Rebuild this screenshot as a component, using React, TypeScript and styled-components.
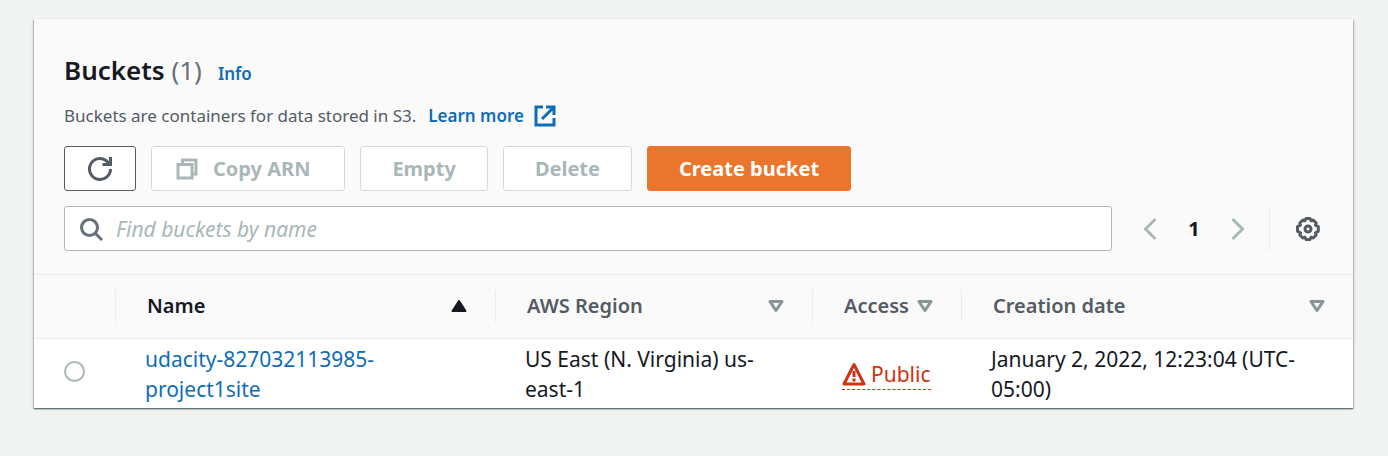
import React from "react";
import styled, { createGlobalStyle, css } from "styled-components";

const GlobalStyle = createGlobalStyle`
  *, *::before, *::after { box-sizing: border-box; }
  body {
    margin: 0;
    background: #f1f3f3;
    color: #16191f;
    font-family: "Noto Sans", "Open Sans", sans-serif;
    font-size: 20px;
    line-height: 30px;
  }
  button, input { font: inherit; }
`;

const Page = styled.main`
  padding: 19px 35px 48px 34px;
`;

const Panel = styled.section`
  background: #fff;
  box-shadow: 0 1px 1px 0 rgba(0, 28, 36, 0.4), 1px 1px 2px 0 rgba(0, 28, 36, 0.25),
    -1px 1px 2px 0 rgba(0, 28, 36, 0.25);
`;

const PanelHeader = styled.header`
  padding: 30px 30px 23px;
  background: #fafafa;
  border-bottom: 1px solid #eaeded;
`;

const TitleRow = styled.div`
  display: flex;
  align-items: baseline;
  gap: 16px;
  line-height: 42px;
`;

const Title = styled.h1`
  margin: 0;
  font-size: 26px;
  font-weight: 600;
`;

const Count = styled.span`
  color: #687078;
  font-weight: 400;
`;

const InfoLink = styled.a`
  color: #0f6db7;
  font-size: 17px;
  font-weight: 600;
  text-decoration: none;
`;

const Description = styled.p`
  display: flex;
  align-items: center;
  margin: 6px 0 15px;
  color: #545b64;
  font-size: 17px;
`;

const LearnMore = styled.a`
  display: inline-flex;
  align-items: center;
  gap: 10px;
  margin-left: 12px;
  color: #0f6db7;
  font-weight: 600;
  text-decoration: none;
`;

const Actions = styled.div`
  display: flex;
  flex-wrap: wrap;
  gap: 15px;
`;

const Button = styled.button<{ $variant?: "primary" | "icon" | "labelled" }>`
  display: inline-flex;
  align-items: center;
  justify-content: center;
  gap: 15px;
  height: 45px;
  padding: 0 31px;
  border: 1px solid #545b64;
  border-radius: 3px;
  background: #fff;
  color: #545b64;
  font-weight: 700;
  cursor: pointer;

  &:disabled {
    border-color: #d5dbdb;
    color: #aab7b8;
    cursor: default;
  }

  ${({ $variant }) =>
    $variant === "primary" &&
    css`
      border-color: #ea752c;
      background: #ea752c;
      color: #fff;
    `}

  ${({ $variant }) =>
    $variant === "icon" &&
    css`
      padding: 0 22px;
    `}

  ${({ $variant }) =>
    $variant === "labelled" &&
    css`
      padding: 0 34px 0 24px;
    `}
`;

const Toolbar = styled.div`
  display: flex;
  align-items: center;
  margin-top: 15px;
`;

const SearchBox = styled.label`
  display: flex;
  flex: 1;
  align-items: center;
  gap: 13px;
  height: 45px;
  padding: 0 14px;
  border: 1px solid #aab7b8;
  border-radius: 3px;
  background: #fff;
  color: #687078;
  font-size: 21px;
`;

const SearchInput = styled.input`
  flex: 1;
  min-width: 0;
  padding: 0;
  border: 0;
  outline: 0;
  background: transparent;
  color: #16191f;

  &::placeholder {
    color: #aab7b8;
    font-style: italic;
    opacity: 1;
  }
`;

const Pagination = styled.nav`
  display: flex;
  align-items: center;
  gap: 20px;
  margin: 0 19px 0 26px;
`;

const PlainButton = styled.button`
  display: flex;
  align-items: center;
  justify-content: center;
  width: 24px;
  height: 30px;
  padding: 0;
  border: 0;
  background: transparent;
  color: #545b64;
  font-weight: 700;
  cursor: pointer;

  &:disabled {
    color: #aab7b8;
  }

  &[aria-current] {
    color: #16191f;
  }
`;

const Preferences = styled.div`
  display: flex;
  align-items: center;
  height: 45px;
  padding: 0 3px 0 26px;
  border-left: 1px solid #eaeded;
`;

const Table = styled.table`
  width: 100%;
  table-layout: fixed;
  border-collapse: collapse;
`;

const Column = styled.col<{ $width: number }>`
  width: ${({ $width }) => $width}px;
`;

const HeadCell = styled.th`
  height: 63px;
  padding: 0;
  border-bottom: 1px solid #eaeded;
  background: #fafafa;
  text-align: left;
`;

const HeadContent = styled.div<{ $sorted?: boolean }>`
  display: flex;
  align-items: center;
  justify-content: space-between;
  height: 32px;
  padding: 0 28px 0 31px;
  border-left: 1px solid #eaeded;
  color: ${({ $sorted }) => ($sorted ? "#16191f" : "#545b64")};
  font-weight: 600;
  white-space: nowrap;
`;

const Cell = styled.td`
  height: 69px;
  padding: 5px 30px 4px;
  font-size: 21px;
  vertical-align: middle;
`;

const Radio = styled.input`
  display: block;
  width: 21px;
  height: 21px;
  margin: 0 0 4px;
  border: 2px solid #aab7b8;
  border-radius: 50%;
  appearance: none;
  background: #fff;

  &:checked {
    border: 6px solid #0f6db7;
  }
`;

const BucketLink = styled.a`
  color: #0f6db7;
  text-decoration: none;
`;

const AccessStatus = styled.span`
  display: inline-flex;
  align-items: center;
  gap: 5px;
  border-bottom: 1px dashed #d13212;
  color: #d13212;
  vertical-align: middle;
`;

const ExternalIcon = () => (
  <svg width="22" height="22" viewBox="0 0 22 22" fill="none" stroke="currentColor" strokeWidth="3" aria-hidden="true">
    <path d="M9 2H2v18h18v-7M12 2h8v8M20 2 8 14" />
  </svg>
);

const RefreshIcon = () => (
  <svg width="26" height="26" viewBox="0 0 26 26" fill="none" stroke="currentColor" strokeWidth="3" aria-hidden="true">
    <path d="M23.500 13a10.500 10.500 0 1 1-4.500-8.600l4 4" />
    <path d="M23.500 1v7.500h-8" />
  </svg>
);

const CopyIcon = () => (
  <svg width="22" height="22" viewBox="0 0 22 22" fill="none" stroke="currentColor" strokeWidth="3" aria-hidden="true">
    <path d="M2 6.500h14V20H2zM6.500 6.500V2H20v14h-4" />
  </svg>
);

const SearchIcon = () => (
  <svg width="24" height="24" viewBox="0 0 24 24" fill="none" stroke="currentColor" strokeWidth="3" aria-hidden="true">
    <circle cx="10.500" cy="10.500" r="8" />
    <path d="m16 16 7 7" />
  </svg>
);

const ChevronIcon = ({ direction }: { direction: "left" | "right" }) => (
  <svg width="14" height="24" viewBox="0 0 14 24" fill="none" stroke="currentColor" strokeWidth="3" aria-hidden="true">
    <path d={direction === "left" ? "M12.500 2 2.500 12l10 10" : "m1.500 2 10 10-10 10"} />
  </svg>
);

const GearIcon = () => (
  <svg width="24" height="24" viewBox="0 0 24 24" fill="none" stroke="currentColor" strokeWidth="3" strokeLinejoin="round" aria-hidden="true">
    <path d="M10 1.500h4l1 2.200 2.200-.7 3 3-.8 2.200 2.900 1.500v4.600l-2.900 1.500.8 2.200-3 3-2.200-.7-1 2.200h-4l-1-2.200-2.200.7-3-3 .8-2.200L1.500 14.300V9.700l2.900-1.500L3.800 6l3-3 2.200.7z" />
    <circle cx="12" cy="12" r="3" />
  </svg>
);

const SortIcon = ({ ascending }: { ascending?: boolean }) => (
  <svg width="16" height="14" viewBox="0 0 16 14" strokeLinejoin="round" aria-hidden="true">
    {ascending ? (
      <path d="M8 2 14.500 12h-13z" fill="#16191f" stroke="#16191f" strokeWidth="2" />
    ) : (
      <path d="M2 2.500h12L8 11.500z" fill="none" stroke="#879596" strokeWidth="3" />
    )}
  </svg>
);

const WarningIcon = () => (
  <svg width="24" height="24" viewBox="0 0 24 24" fill="none" stroke="currentColor" strokeWidth="3" strokeLinejoin="round" aria-hidden="true">
    <path d="M12 2.500 22 22H2z" />
    <path d="M12 9v6M12 16.500v3" />
  </svg>
);

const sortableColumns = [
  { label: "Name", sorted: true },
  { label: "AWS Region" },
  { label: "Access" },
  { label: "Creation date" },
];

export default function App() {
  return (
    <>
      <GlobalStyle />
      <Page>
        <Panel>
          <PanelHeader>
            <TitleRow>
              <Title>
                Buckets <Count>(1)</Count>
              </Title>
              <InfoLink href="#info">Info</InfoLink>
            </TitleRow>
            <Description>
              Buckets are containers for data stored in S3.
              <LearnMore href="#learn-more">
                Learn more
                <ExternalIcon />
              </LearnMore>
            </Description>
            <Actions>
              <Button $variant="icon" aria-label="Refresh">
                <RefreshIcon />
              </Button>
              <Button $variant="labelled" disabled>
                <CopyIcon />
                Copy ARN
              </Button>
              <Button disabled>Empty</Button>
              <Button disabled>Delete</Button>
              <Button $variant="primary">Create bucket</Button>
            </Actions>
            <Toolbar>
              <SearchBox>
                <SearchIcon />
                <SearchInput type="text" aria-label="Find buckets by name" placeholder="Find buckets by name" />
              </SearchBox>
              <Pagination aria-label="Pages">
                <PlainButton disabled aria-label="Previous page">
                  <ChevronIcon direction="left" />
                </PlainButton>
                <PlainButton aria-current="page">1</PlainButton>
                <PlainButton disabled aria-label="Next page">
                  <ChevronIcon direction="right" />
                </PlainButton>
              </Pagination>
              <Preferences>
                <PlainButton aria-label="Preferences">
                  <GearIcon />
                </PlainButton>
              </Preferences>
            </Toolbar>
          </PanelHeader>
          <Table>
            <colgroup>
              <Column $width={81} />
              <Column $width={380} />
              <Column $width={317} />
              <Column $width={149} />
              <Column $width={392} />
            </colgroup>
            <thead>
              <tr>
                <HeadCell aria-label="Selection" />
                {sortableColumns.map(({ label, sorted }) => (
                  <HeadCell key={label} scope="col" aria-sort={sorted ? "ascending" : undefined}>
                    <HeadContent $sorted={sorted}>
                      {label}
                      <SortIcon ascending={sorted} />
                    </HeadContent>
                  </HeadCell>
                ))}
              </tr>
            </thead>
            <tbody>
              <tr>
                <Cell>
                  <Radio type="radio" name="bucket" aria-label="udacity-827032113985-project1site" />
                </Cell>
                <Cell>
                  <BucketLink href="#bucket">udacity-827032113985-project1site</BucketLink>
                </Cell>
                <Cell>US East (N. Virginia) us-east-1</Cell>
                <Cell>
                  <AccessStatus>
                    <WarningIcon />
                    Public
                  </AccessStatus>
                </Cell>
                <Cell>January 2, 2022, 12:23:04 (UTC-05:00)</Cell>
              </tr>
            </tbody>
          </Table>
        </Panel>
      </Page>
    </>
  );
}
